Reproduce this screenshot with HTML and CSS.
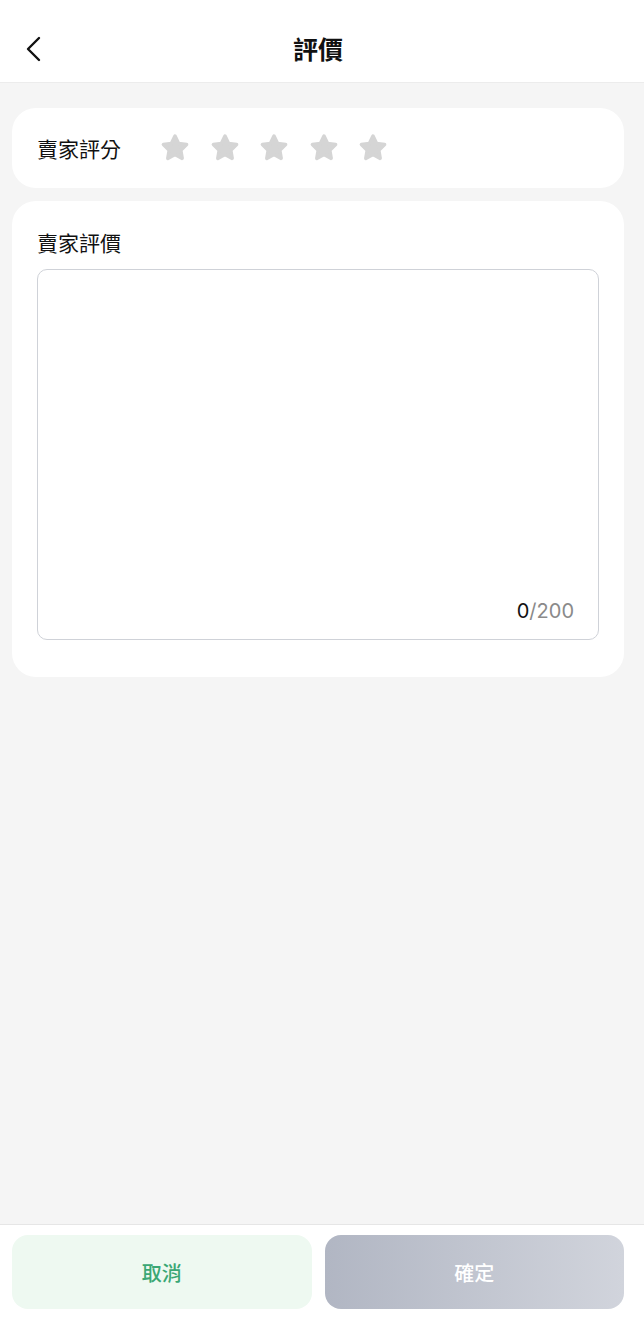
FILE: index.html
```html
<!DOCTYPE html>
<html lang="zh-Hant">
<head>
 <meta charset="UTF-8">
 <meta name="viewport" content="width=device-width, initial-scale=1.0">
 <title>評價</title>
 <link rel="stylesheet" href="styles.css">
</head>
<body>
 <header class="topbar">
  <button class="back" aria-label="返回">
   <svg width="18" height="26" viewBox="0 0 18 26"><path d="M15 2 L4 13 L15 24" fill="none" stroke="#111" stroke-width="2.4" stroke-linecap="round" stroke-linejoin="round"/></svg>
  </button>
  <h1>評價</h1>
 </header>
 <main class="content">
  <section class="card rating">
   <span class="label">賣家評分</span>
   <div class="stars">
    <svg class="star" viewBox="0 0 32 32"><path d="M16 4 L19.6 11.6 L27.6 12.6 L21.8 18.3 L23.2 26.4 L16 22.5 L8.8 26.4 L10.2 18.3 L4.4 12.6 L12.4 11.6 Z"/></svg>
    <svg class="star" viewBox="0 0 32 32"><path d="M16 4 L19.6 11.6 L27.6 12.6 L21.8 18.3 L23.2 26.4 L16 22.5 L8.8 26.4 L10.2 18.3 L4.4 12.6 L12.4 11.6 Z"/></svg>
    <svg class="star" viewBox="0 0 32 32"><path d="M16 4 L19.6 11.6 L27.6 12.6 L21.8 18.3 L23.2 26.4 L16 22.5 L8.8 26.4 L10.2 18.3 L4.4 12.6 L12.4 11.6 Z"/></svg>
    <svg class="star" viewBox="0 0 32 32"><path d="M16 4 L19.6 11.6 L27.6 12.6 L21.8 18.3 L23.2 26.4 L16 22.5 L8.8 26.4 L10.2 18.3 L4.4 12.6 L12.4 11.6 Z"/></svg>
    <svg class="star" viewBox="0 0 32 32"><path d="M16 4 L19.6 11.6 L27.6 12.6 L21.8 18.3 L23.2 26.4 L16 22.5 L8.8 26.4 L10.2 18.3 L4.4 12.6 L12.4 11.6 Z"/></svg>
   </div>
  </section>
  <section class="card review">
   <div class="label">賣家評價</div>
   <div class="textbox">
    <textarea maxlength="200"></textarea>
    <div class="counter"><span class="count">0</span>/200</div>
   </div>
  </section>
 </main>
 <footer class="actions">
  <button class="btn cancel">取消</button>
  <button class="btn confirm">確定</button>
 </footer>
</body>
</html>
```

FILE: styles.css
```css
* {
box-sizing: border-box;
}
body {
margin: 0;
height: 1334px;
display: flex;
flex-direction: column;
background-color: #f5f5f5;
font-family: "Noto Sans CJK TC", "Noto Sans", sans-serif;
color: #111;
}
.topbar {
height: 83px;
flex-shrink: 0;
background-color: #fff;
border-bottom: 1px solid #ececec;
display: flex;
align-items: center;
justify-content: center;
padding: 14px 8px 0 0;
position: relative;
}
.topbar h1 {
margin: 0;
font-size: 25px;
font-weight: 700;
}
.back {
position: absolute;
left: 24px;
top: 36px;
background: none;
border: none;
padding: 0;
}
.content {
flex: 1;
padding: 25px 20px 25px 12px;
display: flex;
flex-direction: column;
gap: 13px;
}
.card {
background-color: #fff;
border-radius: 24px;
padding: 0 25px;
}
.label {
font-size: 21px;
line-height: 28px;
}
.rating {
height: 80px;
display: flex;
align-items: center;
gap: 38px;
}
.stars {
display: flex;
gap: 17.5px;
}
.star {
width: 32px;
height: 32px;
}
.star path {
fill: #d5d5d5;
stroke: #d5d5d5;
stroke-width: 3.5;
stroke-linejoin: round;
}
.review {
padding-top: 27px;
padding-bottom: 37px;
}
.textbox {
margin-top: 13px;
height: 371px;
border: 1px solid #cfd2d8;
border-radius: 10px;
display: flex;
flex-direction: column;
padding: 12px 24px 16px 16px;
}
.textbox textarea {
flex: 1;
border: none;
outline: none;
resize: none;
font-family: inherit;
font-size: 18px;
padding: 0;
}
.counter {
text-align: right;
font-family: Inter, "Noto Sans", sans-serif;
font-size: 20px;
color: #8a8a8a;
}
.count {
color: #111;
}
.actions {
flex-shrink: 0;
background-color: #fff;
border-top: 1px solid #e6e6e6;
display: flex;
gap: 13px;
padding: 10px 20px 25px 12px;
}
.btn {
flex: 1;
height: 74px;
border: none;
border-radius: 16px;
font-family: "Noto Sans CJK TC", sans-serif;
font-size: 20px;
font-weight: 500;
}
.cancel {
background-color: #eef9f1;
color: #3aa774;
}
.confirm {
background: linear-gradient(90deg, #b1b6c3, #d1d4dc);
color: #fff;
}
```
